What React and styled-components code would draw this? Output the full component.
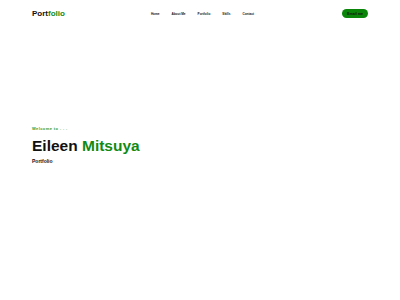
import React from "react";
import styled, { createGlobalStyle } from "styled-components";

const Global = createGlobalStyle`
  html, body { margin: 0; padding: 0; background: #fff; }
  body { font-family: "Liberation Sans", Arial, sans-serif; color: #111; }
`;

const Page = styled.div`
  width: 400px;
  height: 300px;
  display: flex;
  flex-direction: column;
`;

const Header = styled.header`
  display: flex;
  align-items: center;
  padding: 8px 32px 0 32px;
  height: 11px;
`;

const Logo = styled.div`
  font-size: 8px;
  font-weight: 700;
  color: #111;
`;

const Green = styled.span`
  color: #138a13;
`;

const Nav = styled.nav`
  display: flex;
  gap: 12px;
  margin-left: 86px;
`;

const NavLink = styled.a`
  font-size: 3.1px;
  font-weight: 700;
  color: #111;
  text-decoration: none;
`;

const Button = styled.button`
  margin-left: auto;
  background: #0a850a;
  color: #111;
  border: none;
  border-radius: 5px;
  font-family: inherit;
  font-size: 3.6px;
  font-weight: 700;
  width: 26px;
  height: 9px;
  padding: 0;
`;

const Hero = styled.section`
  padding: 107px 32px 0 32px;
  display: flex;
  flex-direction: column;
`;

const Welcome = styled.div`
  font-size: 4px;
  font-weight: 700;
  color: #2e9a2e;
  letter-spacing: 0.4px;
`;

const Name = styled.h1`
  margin: 5px 0 0 0;
  font-size: 15.5px;
  font-weight: 700;
  line-height: 19px;
  color: #111;
`;

const Sub = styled.div`
  margin-top: 3px;
  font-size: 5px;
  font-weight: 700;
  color: #111;
`;

export default function App() {
  return (
    <Page>
      <Global />
      <Header>
        <Logo>
          Port<Green>folio</Green>
        </Logo>
        <Nav>
          <NavLink>Home</NavLink>
          <NavLink>About Me</NavLink>
          <NavLink>Portfolio</NavLink>
          <NavLink>Skills</NavLink>
          <NavLink>Contact</NavLink>
        </Nav>
        <Button>Email me</Button>
      </Header>
      <Hero>
        <Welcome>Welcome to . . .</Welcome>
        <Name>
          Eileen <Green>Mitsuya</Green>
        </Name>
        <Sub>Portfolio</Sub>
      </Hero>
    </Page>
  );
}
